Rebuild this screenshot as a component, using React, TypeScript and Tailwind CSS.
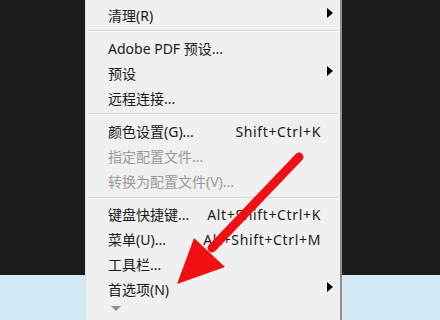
type Item =
  | { kind: "sep"; line: number }
  | { label: string; shortcut?: string; sub?: boolean; disabled?: boolean };

const items: Item[] = [
  { label: "清理(R)", sub: true },
  { kind: "sep", line: 2 },
  { label: "Adobe PDF 预设..." },
  { label: "预设", sub: true },
  { label: "远程连接..." },
  { kind: "sep", line: 2 },
  { label: "颜色设置(G)...", shortcut: "Shift+Ctrl+K" },
  { label: "指定配置文件...", disabled: true },
  { label: "转换为配置文件(V)...", disabled: true },
  { kind: "sep", line: 3 },
  { label: "键盘快捷键...", shortcut: "Alt+Shift+Ctrl+K" },
  { label: "菜单(U)...", shortcut: "Alt+Shift+Ctrl+M" },
  { label: "工具栏..." },
  { label: "首选项(N)", sub: true },
];

function SubArrow() {
  return (
    <svg width="6" height="10" viewBox="0 0 6 10" className="mt-[-6px] ml-[6px]">
      <path d="M0 0 L6 5 L0 10 Z" fill="#000" />
    </svg>
  );
}

function MenuRow({ item }: { item: Item }) {
  if ("kind" in item) {
    return (
      <div className={"flex h-[8px] flex-col " + (item.line === 3 ? "pt-[3px]" : "pt-[2px]")}>
        <div className="mx-[2px] h-px bg-[#d4d4d4]" />
        <div className="mx-[2px] h-px bg-white" />
      </div>
    );
  }
  return (
    <div className="flex h-[25px] items-center pl-[22px]">
      <span className={"flex-1 whitespace-nowrap " + (item.disabled ? "text-[#9a9a9a]" : "text-[#1a1a1a]")}>
        {item.label}
      </span>
      {item.shortcut && (
        <span className="whitespace-nowrap tracking-[0.65px] text-[#1a1a1a]">{item.shortcut}</span>
      )}
      <div className="flex w-[19px] items-center">{item.sub && <SubArrow />}</div>
    </div>
  );
}

export default function App() {
  return (
    <div
      className="relative h-[320px] w-[440px] overflow-hidden text-[14px] leading-none"
      style={{ fontFamily: '"Noto Sans", "Noto Sans CJK SC", sans-serif' }}
    >
      <div className="flex h-full flex-col">
        <div className="h-[275px] bg-[#1c1c1c]" />
        <div className="flex-1 bg-[#d3e9f3]" />
      </div>

      {/* context menu */}
      <div className="absolute left-[85px] top-0 h-[330px] w-[257px] border-l border-r-2 border-l-[#dedede] border-r-[#8e8e8e] bg-[#f0f0f0] pt-[3px]">
        {items.map((it, i) => (
          <MenuRow key={i} item={it} />
        ))}
        <div className="flex h-[12px] items-center pl-[25px]">
          <svg width="10" height="5" viewBox="0 0 10 5">
            <path d="M0 0 L10 0 L5 5 Z" fill="#8c8c8c" />
          </svg>
        </div>
      </div>

      {/* red annotation arrow */}
      <svg className="pointer-events-none absolute left-0 top-0" width="440" height="320" viewBox="0 0 440 320">
        <line x1="299" y1="157" x2="212" y2="248" stroke="#f20f14" strokeWidth="9" strokeLinecap="round" />
        <polygon points="177,284 194,238 225,267" fill="#f20f14" />
      </svg>
    </div>
  );
}
